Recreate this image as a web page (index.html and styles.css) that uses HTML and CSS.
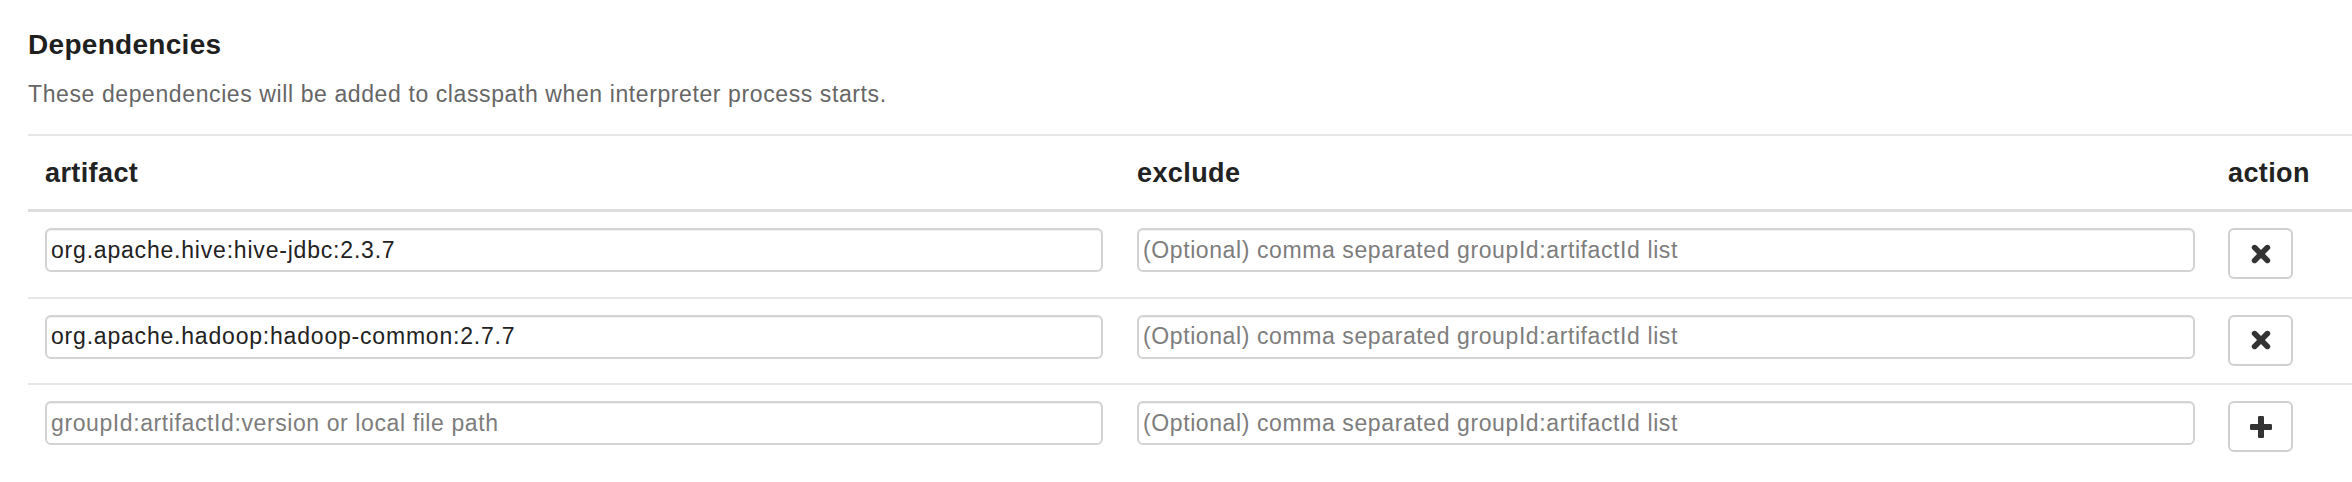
FILE: index.html
```html
<!DOCTYPE html>
<html lang="en">
<head>
<meta charset="utf-8">
<title>Dependencies</title>
<link rel="stylesheet" href="styles.css">
</head>
<body>
<section class="panel">
  <h4 class="title">Dependencies</h4>
  <p class="desc">These dependencies will be added to classpath when interpreter process starts.</p>
  <table class="deps">
    <colgroup>
      <col class="col-artifact">
      <col class="col-exclude">
      <col class="col-action">
    </colgroup>
    <thead>
      <tr>
        <th>artifact</th>
        <th>exclude</th>
        <th class="cell-action">action</th>
      </tr>
    </thead>
    <tbody>
      <tr>
        <td><input class="field" type="text" value="org.apache.hive:hive-jdbc:2.3.7"></td>
        <td><input class="field" type="text" placeholder="(Optional) comma separated groupId:artifactId list"></td>
        <td class="cell-action">
          <button class="btn" type="button" aria-label="remove">
            <svg class="icon" width="20" height="20" viewBox="0 0 20 20"><path d="M3.6 3.6 L16.4 16.4 M16.4 3.6 L3.6 16.4" stroke="#333" stroke-width="5.6" stroke-linecap="round" fill="none"/></svg>
          </button>
        </td>
      </tr>
      <tr>
        <td><input class="field" type="text" value="org.apache.hadoop:hadoop-common:2.7.7"></td>
        <td><input class="field" type="text" placeholder="(Optional) comma separated groupId:artifactId list"></td>
        <td class="cell-action">
          <button class="btn" type="button" aria-label="remove">
            <svg class="icon" width="20" height="20" viewBox="0 0 20 20"><path d="M3.6 3.6 L16.4 16.4 M16.4 3.6 L3.6 16.4" stroke="#333" stroke-width="5.6" stroke-linecap="round" fill="none"/></svg>
          </button>
        </td>
      </tr>
      <tr>
        <td><input class="field" type="text" placeholder="groupId:artifactId:version or local file path"></td>
        <td><input class="field" type="text" placeholder="(Optional) comma separated groupId:artifactId list"></td>
        <td class="cell-action">
          <button class="btn" type="button" aria-label="add">
            <svg class="icon" width="22" height="22" viewBox="0 0 22 22"><rect x="0" y="8" width="22" height="6" rx="1.2" fill="#333"/><rect x="8" y="0" width="6" height="22" rx="1.2" fill="#333"/></svg>
          </button>
        </td>
      </tr>
    </tbody>
  </table>
</section>
</body>
</html>
```

FILE: styles.css
```css
html, body {
  margin: 0;
  padding: 0;
  background: #ffffff;
}

body {
  font-family: "Liberation Sans", Arial, Helvetica, sans-serif;
  color: #222222;
}

.panel {
  padding: 29px 0 0 28px;
}

.title {
  margin: 0;
  font-size: 28px;
  line-height: 32px;
  letter-spacing: 0.3px;
  font-weight: bold;
  color: #1f1f1f;
}

.desc {
  margin: 18px 0 0;
  font-size: 23px;
  line-height: 30px;
  letter-spacing: 0.6px;
  color: #666666;
}

.deps {
  margin-top: 25px;
  width: 100%;
  table-layout: fixed;
  border-collapse: separate;
  border-spacing: 0;
}

.col-artifact,
.col-exclude {
  width: 1092px;
}

.deps th {
  border-top: 2px solid #e6e6e6;
  border-bottom: 3px solid #dddddd;
  padding: 20.5px 17px 20.5px;
  text-align: left;
  vertical-align: bottom;
  font-size: 27px;
  line-height: 32px;
  letter-spacing: 0.4px;
  font-weight: bold;
  color: #222222;
}

.deps td {
  border-top: 2px solid #e6e6e6;
  padding: 16px 17px 17.5px;
  vertical-align: top;
}

.deps tbody tr:first-child td {
  border-top: 0;
}

.deps .cell-action {
  padding-left: 16px;
}

.field {
  display: block;
  box-sizing: border-box;
  width: 100%;
  height: 44px;
  margin: 0;
  padding: 0 4px;
  border: 2px solid #d3d3d3;
  border-radius: 6px;
  background: #ffffff;
  box-shadow: inset 0 1px 1px rgba(0, 0, 0, 0.06);
  font-family: "Liberation Sans", Arial, Helvetica, sans-serif;
  font-size: 23px;
  letter-spacing: 0.8px;
  color: #222222;
  outline: none;
}

.field::placeholder {
  color: #7d7d7d;
  letter-spacing: 0.6px;
  opacity: 1;
}

.btn {
  display: flex;
  align-items: center;
  justify-content: center;
  box-sizing: border-box;
  width: 65px;
  height: 51px;
  margin: 0;
  padding: 0;
  border: 2px solid #d0d0d0;
  border-radius: 6px;
  background: #ffffff;
  cursor: pointer;
}

.icon {
  display: block;
}
```
